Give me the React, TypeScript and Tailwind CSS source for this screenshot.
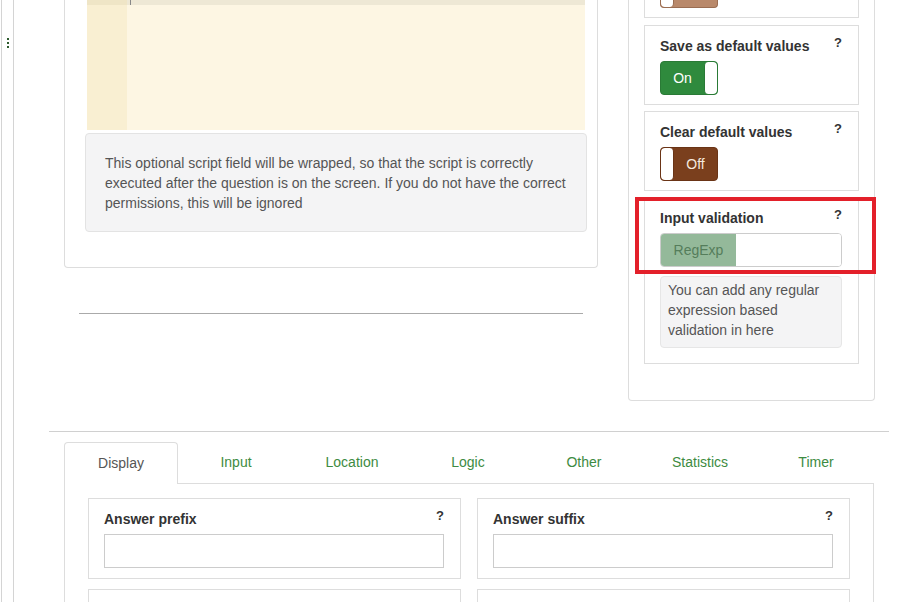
import React from "react"

interface ToggleProps {
  on: boolean
}

function Toggle({ on }: ToggleProps) {
  if (on) {
    return (
      <div className="flex h-[34px] w-[58px] overflow-hidden rounded-[4px] border border-[#2a7a36] bg-[#2f8a3d]">
        <div className="flex flex-1 items-center justify-center text-[14px] text-white">On</div>
        <div className="w-[13px] rounded-[4px] border-l border-[#2a7a36] bg-white" />
      </div>
    )
  }
  return (
    <div className="flex h-[34px] w-[58px] overflow-hidden rounded-[4px] border border-[#6a3416] bg-[#7a3f1d]">
      <div className="w-[13px] rounded-[4px] border-r border-[#6a3416] bg-white" />
      <div className="flex flex-1 items-center justify-center text-[14px] text-[#f5e9df]">Off</div>
    </div>
  )
}

interface FieldCardProps {
  title: string
  children: React.ReactNode
  className?: string
}

function FieldCard({ title, children, className = "" }: FieldCardProps) {
  return (
    <div className={`border border-[#dddddd] bg-white pt-[10px] pl-[15px] pr-[16px] ${className}`}>
      <div className="flex items-start justify-between">
        <span className="text-[14px] leading-[20px] font-bold text-[#333]">{title}</span>
        <span className="-mt-[3px] text-[13px] leading-[20px] font-bold text-[#333]">?</span>
      </div>
      <div className="mt-[5px]">{children}</div>
    </div>
  )
}

const tabs = ["Display", "Input", "Location", "Logic", "Other", "Statistics", "Timer"]

export default function App() {
  return (
    <div className="flex h-[602px] w-[919px] overflow-hidden bg-white font-['Liberation_Sans',Arial,sans-serif]">
      {/* 左侧竖线 */}
      <div className="ml-[1px] flex h-full w-[13px] shrink-0 flex-col items-center border-x border-[#d4d4d4] pt-[38px]">
        <div className="flex flex-col gap-[2px]">
          <div className="h-[2px] w-[2px] bg-[#2d5a2d]" />
          <div className="h-[2px] w-[2px] bg-[#2d5a2d]" />
          <div className="h-[2px] w-[2px] bg-[#2d5a2d]" />
        </div>
      </div>

      <div className="flex-1">
        {/* 上部 */}
        <div className="flex">
          {/* 脚本面板 */}
          <div className="ml-[50px] w-[534px]">
            <div className="rounded-b-[4px] border-x border-b border-[#dddddd] pr-[10px] pb-[35px] pl-[20px]">
              <div className="mx-[2px] flex h-[130px] bg-[#fdf6e3]">
                <div className="w-[40px] bg-[#f9efd2]">
                  <div className="h-[5px] overflow-hidden bg-[#efe5c6]">
                    <div className="-mt-[15px] text-center text-[13px] leading-[20px] text-[#333]">1</div>
                  </div>
                </div>
                <div className="flex-1">
                  <div className="flex h-[5px] bg-[#eee8d5]">
                    <div className="ml-[3px] h-[5px] w-[1px] bg-[#888]" />
                  </div>
                </div>
              </div>
              <div className="mt-[3px] rounded-[4px] border border-[#e3e3e3] bg-[#f4f4f5] pt-[19px] pr-[16px] pb-[18px] pl-[19px] text-[14px] leading-[20px] text-[#555]">
                This optional script field will be wrapped, so that the script is correctly executed after the question is on the screen. If you do not have the correct permissions, this will be ignored
              </div>
            </div>
            <div className="mx-[15px] mt-[45px] h-[1px] bg-[#aaaaaa]" />
          </div>

          {/* 右侧设置 */}
          <div className="relative ml-[30px] w-[247px]">
            <div className="rounded-b-[4px] border-x border-b border-[#dddddd] px-[15px] pb-[36px]">
              <div className="h-[18px] border-x border-b border-[#dddddd] pl-[15px]">
                <div className="flex h-[8px] w-[58px] overflow-hidden rounded-b-[4px] border-x border-b border-[#9a6d52] bg-[#b9896b]">
                  <div className="w-[13px] rounded-b-[4px] border-r border-[#9a6d52] bg-white" />
                </div>
              </div>
              <FieldCard title="Save as default values" className="mt-[7px] pb-[9px]">
                <Toggle on />
              </FieldCard>
              <FieldCard title="Clear default values" className="mt-[6px] pb-[9px]">
                <Toggle on={false} />
              </FieldCard>
              <FieldCard title="Input validation" className="mt-[6px] pb-[15px]">
                <div className="flex h-[34px] overflow-hidden rounded-[4px] border border-[#cccccc]">
                  <div className="flex w-[75px] items-center justify-center bg-[#94b99a] text-[14px] text-[#557d5b]">RegExp</div>
                  <div className="flex-1 bg-white" />
                </div>
                <div className="mt-[9px] rounded-[4px] border border-[#e6e6e6] bg-[#f4f4f5] pt-[3px] pr-[6px] pb-[7px] pl-[7px] text-[14px] leading-[20px] text-[#555]">
                  You can add any regular expression based validation in here
                </div>
              </FieldCard>
            </div>
            <div className="pointer-events-none absolute top-[197px] left-[7px] h-[77px] w-[241px] border-4 border-[#e3202a]" />
          </div>
        </div>

        {/* 分隔线 */}
        <div className="mt-[30px] ml-[35px] h-[1px] w-[840px] bg-[#d0d0d0]" />

        {/* 标签页 */}
        <div className="mt-[10px] ml-[50px] w-[810px]">
          <div className="flex border-b border-[#dddddd]">
            {tabs.map((tab, i) =>
              i === 0 ? (
                <div
                  key={tab}
                  className="-mb-[1px] flex h-[42px] w-[114px] items-center justify-center rounded-t-[4px] border-x border-t border-[#dddddd] bg-white text-[14px] text-[#555]"
                >
                  {tab}
                </div>
              ) : (
                <div key={tab} className="flex h-[41px] flex-1 items-center justify-center text-[14px] text-[#3d8b42]">
                  {tab}
                </div>
              )
            )}
          </div>
          <div className="border-x border-[#dddddd] px-[23px] pt-[14px]">
            <div className="grid grid-cols-2 gap-x-[16px] gap-y-[10px]">
              {["Answer prefix", "Answer suffix", "", ""].map((label, i) => (
                <FieldCard key={i} title={label} className="pb-[10px]">
                  <div className="h-[34px] border border-[#cccccc] bg-white" />
                </FieldCard>
              ))}
            </div>
          </div>
        </div>
      </div>
    </div>
  )
}
